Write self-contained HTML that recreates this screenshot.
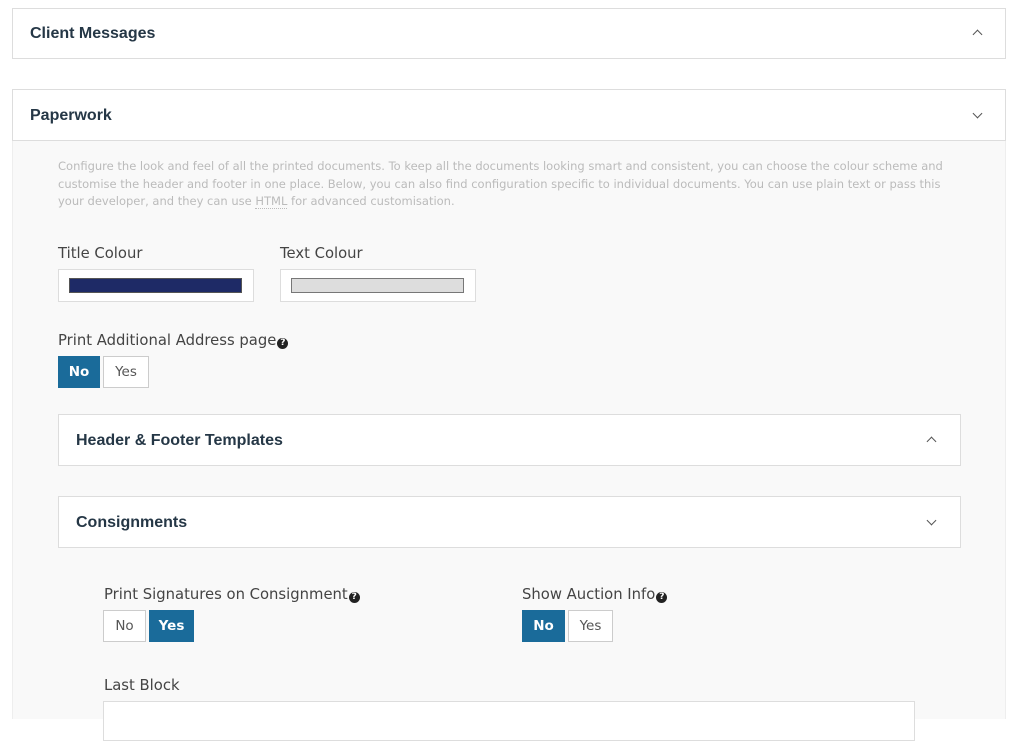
<!DOCTYPE html>
<html><head><style>
*{box-sizing:border-box;margin:0;padding:0}
body{width:1016px;height:719px;overflow:hidden;background:#fff;font-family:"Liberation Sans",sans-serif;position:relative;color:#444}
.a{position:absolute}
.box{position:absolute;border:1px solid #ddd;background:#fff}
.h{position:absolute;font-weight:bold;font-size:16px;color:#253746}
.chev{position:absolute;width:7px;height:7px;border-left:1.3px solid #555;border-top:1.3px solid #555}
.up{transform:rotate(45deg)}
.dn{transform:rotate(225deg)}
.lbl{position:absolute;font-size:14.8px;color:#444;font-family:"DejaVu Sans",sans-serif;white-space:nowrap}
.btn{position:absolute;height:32px;font-size:13.5px;text-align:center;line-height:31px;border:1px solid #ccc;background:#fff;color:#555;font-family:"DejaVu Sans",sans-serif}
.on{background:#1a6b9a;border-color:#1a6b9a;color:#fff;font-weight:bold}
.q{display:inline-block;width:11px;height:11px;border-radius:50%;background:#222;color:#fff;font-size:9px;line-height:11px;text-align:center;font-weight:bold;vertical-align:0px;margin-left:1px}
</style></head><body>
<div class="box" style="left:12px;top:8px;width:994px;height:51px"></div>
<div class="h" style="left:30px;top:25px">Client Messages</div>
<div class="chev up" style="left:974px;top:31px"></div>

<div class="a" style="left:12px;top:140px;width:994px;height:579px;background:#f9f9f9;border-left:1px solid #eee;border-right:1px solid #eee"></div>
<div class="box" style="left:12px;top:89px;width:994px;height:52px"></div>
<div class="h" style="left:30px;top:107px">Paperwork</div>
<div class="chev dn" style="left:974px;top:110px"></div>

<div class="a" style="left:58px;top:158px;white-space:nowrap;font-family:'DejaVu Sans',sans-serif;font-size:11.5px;line-height:17.5px;color:#bbb">Configure the look and feel of all the printed documents. To keep all the documents looking smart and consistent, you can choose the colour scheme and<br>customise the header and footer in one place. Below, you can also find configuration specific to individual documents. You can use plain text or pass this<br>your developer, and they can use <span style="border-bottom:1px dotted #bbb">HTML</span> for advanced customisation.</div>

<div class="lbl" style="left:58px;top:245px">Title Colour</div>
<div class="box" style="left:58px;top:269px;width:196px;height:33px"></div>
<div class="a" style="left:69px;top:278px;width:173px;height:15px;background:#1e2a66;border:1px solid #555"></div>
<div class="lbl" style="left:280px;top:245px">Text Colour</div>
<div class="box" style="left:280px;top:269px;width:196px;height:33px"></div>
<div class="a" style="left:291px;top:278px;width:173px;height:15px;background:#ddd;border:1px solid #777"></div>

<div class="lbl" style="left:58px;top:332px">Print Additional Address page<span class="q">?</span></div>
<div class="btn on" style="left:58px;top:356px;width:42px">No</div>
<div class="btn" style="left:103px;top:356px;width:46px">Yes</div>

<div class="box" style="left:58px;top:414px;width:903px;height:52px"></div>
<div class="h" style="left:76px;top:432px">Header &amp; Footer Templates</div>
<div class="chev up" style="left:928px;top:438px"></div>

<div class="box" style="left:58px;top:496px;width:903px;height:52px"></div>
<div class="h" style="left:76px;top:514px">Consignments</div>
<div class="chev dn" style="left:928px;top:517px"></div>

<div class="lbl" style="left:104px;top:586px">Print Signatures on Consignment<span class="q">?</span></div>
<div class="btn" style="left:103px;top:610px;width:43px">No</div>
<div class="btn on" style="left:149px;top:610px;width:45px">Yes</div>

<div class="lbl" style="left:522px;top:586px">Show Auction Info<span class="q">?</span></div>
<div class="btn on" style="left:522px;top:610px;width:43px">No</div>
<div class="btn" style="left:568px;top:610px;width:45px">Yes</div>

<div class="lbl" style="left:104px;top:677px">Last Block</div>
<div class="box" style="left:103px;top:701px;width:812px;height:40px"></div>
</body></html>
